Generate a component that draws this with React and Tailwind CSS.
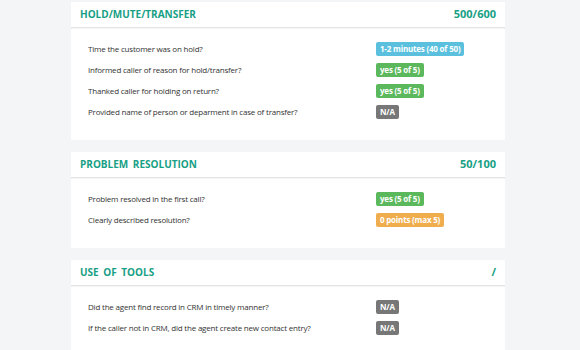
import React from "react";

const badgeCls = {
  blue: "bg-[#5bc0de]",
  green: "bg-[#5cb85c]",
  gray: "bg-[#777777]",
  orange: "bg-[#f0ad4e]",
};

const sections = [
  {
    title: "HOLD/MUTE/TRANSFER",
    score: "500/600",
    rows: [
      ["Time the customer was on hold?", "1-2 minutes (40 of 50)", "blue"],
      ["Informed caller of reason for hold/transfer?", "yes (5 of 5)", "green"],
      ["Thanked caller for holding on return?", "yes (5 of 5)", "green"],
      ["Provided name of person or deparment in case of transfer?", "N/A", "gray"],
    ],
    h: "h-[138px]",
  },
  {
    title: "PROBLEM RESOLUTION",
    score: "50/100",
    rows: [
      ["Problem resolved in the first call?", "yes (5 of 5)", "green"],
      ["Clearly described resolution?", "0 points (max 5)", "orange"],
    ],
    h: "h-[96px]",
  },
  {
    title: "USE OF TOOLS",
    score: "/",
    rows: [
      ["Did the agent find record in CRM in timely manner?", "N/A", "gray"],
      ["If the caller not in CRM, did the agent create new contact entry?", "N/A", "gray"],
    ],
    h: "h-[96px]",
  },
];

export default function App() {
  return (
    <div
      className="w-[580px] h-[350px] overflow-hidden bg-[#f4f5f7] pt-[2px]"
      style={{ fontFamily: '"Open Sans", sans-serif' }}
    >
      <div className="ml-[71px] w-[434px] flex flex-col gap-[12px]">
        {sections.map((s) => (
          <div key={s.title} className={`bg-white ${s.h} shrink-0`}>
            <div className="h-[26px] flex items-center justify-between px-[9px] border-b border-[#e3e4e6] shadow-[0_1px_1px_rgba(0,0,0,0.04)]">
              <span className="text-[10px] font-bold text-[#17a085] [word-spacing:2px]">
                {s.title}
              </span>
              <span className="text-[11px] font-bold text-[#17a085]">{s.score}</span>
            </div>
            <div className="pt-[14px] flex flex-col gap-[7px]">
              {s.rows.map(([label, val, c]) => (
                <div key={label} className="flex items-center h-[14px]">
                  <span className="ml-[17px] w-[288px] text-[8px] tracking-[-0.2px] text-[#333]">
                    {label}
                  </span>
                  <span
                    className={`${badgeCls[c]} text-white text-[8px] tracking-[-0.2px] font-bold h-[14px] leading-[14px] px-[4px] rounded-[2px]`}
                  >
                    {val}
                  </span>
                </div>
              ))}
            </div>
          </div>
        ))}
      </div>
    </div>
  );
}
